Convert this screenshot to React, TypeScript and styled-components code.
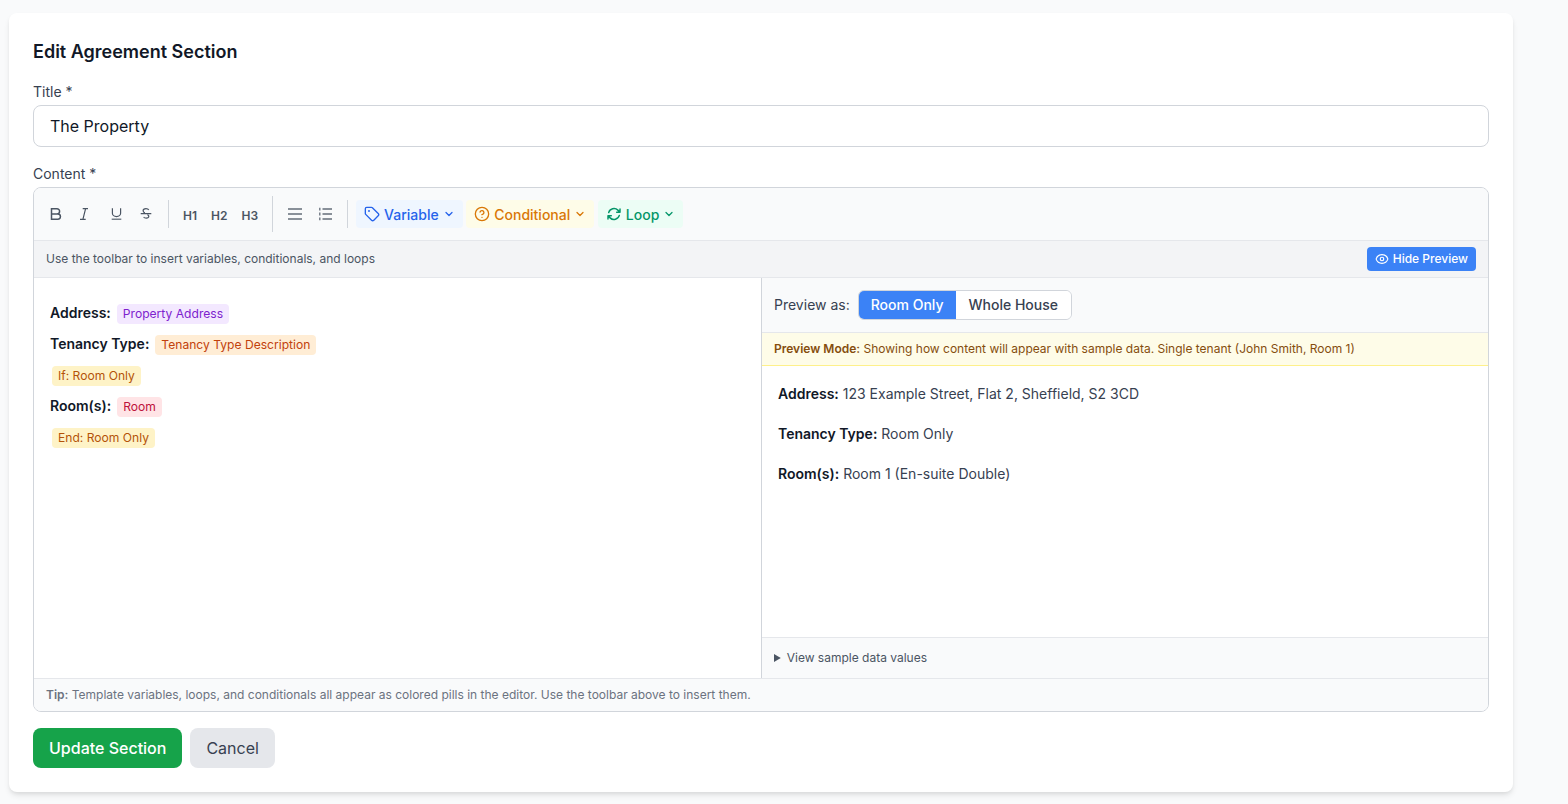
import React from "react";
import styled, { createGlobalStyle } from "styled-components";
import { ChevronDown, CircleHelp, Tag } from "lucide-react";
import { HiOutlineArrowPath, HiOutlineEye } from "react-icons/hi2";

const GlobalStyle = createGlobalStyle`
  * {
    box-sizing: border-box;
  }

  body {
    margin: 0;
    background-color: #f9fafb;
    color: #111827;
    font-family: Inter, "Liberation Sans", sans-serif;
  }
`;

const BoldIcon = () => (
  <ToolIcon viewBox="0 0 16 16" strokeWidth={1.5}>
    <path d="M3.5 2.75h5.5a2.6 2.6 0 0 1 0 5.2H3.5zM3.5 7.95h6.3a2.65 2.65 0 0 1 0 5.3H3.5z" />
  </ToolIcon>
);

const ItalicIcon = () => (
  <ToolIcon viewBox="0 0 16 16" strokeWidth={1.2}>
    <path d="M4.7 2.6H10M2 13.4h5.7M7.6 2.6 4.9 13.4" />
  </ToolIcon>
);

const UnderlineIcon = () => (
  <ToolIcon viewBox="0 0 16 16" strokeWidth={1.2}>
    <path d="M4.4 2.2v5a4.1 3.4 0 0 0 8.2 0v-5" />
    <path d="M3.7 13.3h9.6" strokeWidth={1.4} opacity={0.75} />
  </ToolIcon>
);

const StrikeIcon = () => (
  <ToolIcon viewBox="0 0 16 16" strokeWidth={1.2}>
    <path d="M10.8 3.9c-.5-.8-1.5-1.3-2.8-1.3-1.7 0-2.9.8-2.9 2.1 0 .9.5 1.6 1.8 2.2" />
    <path d="M2.7 7.7h10.6" />
    <path d="M9.4 8.6c1 .5 1.4 1.1 1.4 1.7 0 1-1 1.8-2.6 1.8-1.2 0-2.1-.4-2.6-1.1" />
  </ToolIcon>
);

const BulletIcon = () => (
  <ToolIcon viewBox="0 0 16 16" strokeWidth={1.5} opacity={0.85}>
    <path d="M1 3h14M1 8h14M1 13h14" />
  </ToolIcon>
);

const NumberedIcon = () => (
  <ToolIcon viewBox="0 0 16 16" strokeWidth={1.5} opacity={0.85}>
    <path d="M5.5 3H15M5.5 8H15M5.5 13H15" />
    <path d="M2.8 1.8v2.6M2.8 6.6v2.8M2.8 11.6v2.6" strokeWidth={1.3} />
  </ToolIcon>
);

const formatIcons = [BoldIcon, ItalicIcon, UnderlineIcon, StrikeIcon];

const App: React.FC = () => (
  <>
    <GlobalStyle />
    <Page>
      <Card>
        <Heading>Edit Agreement Section</Heading>
        <Field>
          <Label>Title *</Label>
          <TitleInput defaultValue="The Property" />
        </Field>
        <Field>
          <Label>Content *</Label>
          <Editor>
            <Toolbar>
              {formatIcons.map((Icon, i) => (
                <ToolButton key={i}>
                  <Icon />
                </ToolButton>
              ))}
              <Separator />
              <HeadingButton>H1</HeadingButton>
              <HeadingButton>H2</HeadingButton>
              <HeadingButton>H3</HeadingButton>
              <Separator $tall />
              <ToolButton>
                <BulletIcon />
              </ToolButton>
              <ToolButton>
                <NumberedIcon />
              </ToolButton>
              <Separator />
              <InsertButton $bg="#eff6ff" $fg="#2563eb">
                <Tag size={16} />
                Variable
                <ChevronDown size={12} strokeWidth={2.5} />
              </InsertButton>
              <InsertButton $bg="#fefce8" $fg="#d97706">
                <CircleHelp size={16} />
                Conditional
                <ChevronDown size={12} strokeWidth={2.5} />
              </InsertButton>
              <InsertButton $bg="#ecfdf5" $fg="#059669">
                <HiOutlineArrowPath size={16} strokeWidth={2.2} />
                Loop
                <ChevronDown size={12} strokeWidth={2.5} />
              </InsertButton>
            </Toolbar>
            <HintBar>
              <HintText>Use the toolbar to insert variables, conditionals, and loops</HintText>
              <PreviewToggle>
                <HiOutlineEye size={14} strokeWidth={2} />
                Hide Preview
              </PreviewToggle>
            </HintBar>
            <Split>
              <EditorPane>
                <EditorLine>
                  <strong>Address:</strong> <Pill $bg="#f3e8ff" $fg="#7e22ce">Property Address</Pill>
                </EditorLine>
                <EditorLine>
                  <strong>Tenancy Type:</strong>{" "}
                  <Pill $bg="#ffedd5" $fg="#c2410c">Tenancy Type Description</Pill>
                </EditorLine>
                <EditorLine>
                  <Pill $bg="#fef3c7" $fg="#b45309">If: Room Only</Pill>
                </EditorLine>
                <EditorLine>
                  <strong>Room(s):</strong> <Pill $bg="#ffe4e6" $fg="#be123c">Room</Pill>
                </EditorLine>
                <EditorLine>
                  <Pill $bg="#fef3c7" $fg="#b45309">End: Room Only</Pill>
                </EditorLine>
              </EditorPane>
              <PreviewPane>
                <PreviewBar>
                  <PreviewLabel>Preview as:</PreviewLabel>
                  <Segments>
                    <Segment $active>Room Only</Segment>
                    <Segment>Whole House</Segment>
                  </Segments>
                </PreviewBar>
                <Notice>
                  <strong>Preview Mode:</strong> Showing how content will appear with sample
                  data. Single tenant (John Smith, Room 1)
                </Notice>
                <PreviewBody>
                  <PreviewLine>
                    <strong>Address:</strong> 123 Example Street, Flat 2, Sheffield, S2 3CD
                  </PreviewLine>
                  <PreviewLine>
                    <strong>Tenancy Type:</strong> Room Only
                  </PreviewLine>
                  <PreviewLine>
                    <strong>Room(s):</strong> Room 1 (En-suite Double)
                  </PreviewLine>
                </PreviewBody>
                <SampleData>
                  <summary>View sample data values</summary>
                </SampleData>
              </PreviewPane>
            </Split>
            <TipBar>
              <strong>Tip:</strong> Template variables, loops, and conditionals all appear as
              colored pills in the editor. Use the toolbar above to insert them.
            </TipBar>
          </Editor>
        </Field>
        <Actions>
          <PrimaryButton>Update Section</PrimaryButton>
          <SecondaryButton>Cancel</SecondaryButton>
        </Actions>
      </Card>
    </Page>
  </>
);

export default App;

const Page = styled.div`
  min-height: 804px;
  padding: 13px 55px 12px 9px;
`;

const Card = styled.div`
  background-color: #fff;
  border-radius: 8px;
  box-shadow: 0 4px 6px -1px rgba(0, 0, 0, 0.1), 0 2px 4px -1px rgba(0, 0, 0, 0.06);
  padding: 24px;
`;

const Heading = styled.h2`
  font-size: 18px;
  font-weight: 600;
  height: 28px;
  line-height: 28px;
  margin: 0 0 16px;
  padding-top: 1px;
`;

const Field = styled.div`
  margin-bottom: 16px;
`;

const Label = styled.label`
  color: #374151;
  display: block;
  font-size: 14px;
  height: 20px;
  line-height: 21px;
  margin-bottom: 4px;
`;

const TitleInput = styled.input`
  border: 1px solid #d1d5db;
  border-radius: 8px;
  color: #111827;
  display: block;
  font-family: inherit;
  font-size: 16px;
  height: 42px;
  outline: none;
  padding: 0 16px;
  width: 100%;
`;

const Editor = styled.div`
  border: 1px solid #d1d5db;
  border-radius: 8px;
  overflow: hidden;
`;

const Toolbar = styled.div`
  align-items: center;
  background-color: #f9fafb;
  border-bottom: 1px solid #e5e7eb;
  display: flex;
  gap: 2px;
  height: 53px;
  padding: 0 8px;
`;

const ToolButton = styled.button`
  align-items: center;
  background: none;
  border: none;
  border-radius: 4px;
  color: #4b5563;
  display: flex;
  height: 28px;
  justify-content: center;
  padding: 0;
  width: 28px;
`;

const ToolIcon = styled.svg`
  fill: none;
  height: 16px;
  stroke: currentColor;
  width: 16px;
`;

const HeadingButton = styled.button`
  background: none;
  border: none;
  border-radius: 4px;
  color: #4b5563;
  font-family: inherit;
  font-size: 12px;
  font-weight: 600;
  height: 28px;
  padding: 3px 6px 0;
`;

const Separator = styled.div<{ $tall?: boolean }>`
  background-color: #d1d5db;
  height: ${({ $tall }) => ($tall ? "36px" : "28px")};
  margin: 0 6px;
  width: 1px;
`;

const InsertButton = styled.button<{ $bg: string; $fg: string }>`
  align-items: center;
  background-color: ${({ $bg }) => $bg};
  border: none;
  border-radius: 4px;
  color: ${({ $fg }) => $fg};
  display: flex;
  font-family: inherit;
  font-size: 14px;
  font-weight: 500;
  gap: 4px;
  height: 28px;
  margin-right: 1.6px;
  padding: 0 8px;
`;

const HintBar = styled.div`
  align-items: center;
  background-color: #f3f4f6;
  border-bottom: 1px solid #e5e7eb;
  color: #4b5563;
  display: flex;
  font-size: 12px;
  height: 37px;
  justify-content: space-between;
  padding: 0 12px;
`;

const HintText = styled.span`
  margin-bottom: 2px;
`;

const PreviewToggle = styled.button`
  align-items: center;
  background-color: #3b82f6;
  border: none;
  border-radius: 4px;
  color: #fff;
  display: flex;
  font-family: inherit;
  font-size: 12px;
  font-weight: 500;
  gap: 4px;
  height: 24px;
  padding: 0 8px 1px;
`;

const Split = styled.div`
  display: grid;
  grid-template-columns: calc(50% + 1px) 1fr;
  height: 400px;
`;

const EditorPane = styled.div`
  background-color: #fff;
  border-right: 1px solid #d1d5db;
  padding: 20px 16px;
`;

const EditorLine = styled.p`
  align-items: center;
  color: #111827;
  display: flex;
  font-size: 14px;
  gap: 4px;
  height: 31px;
  margin: 0;

  strong {
    font-weight: 600;
    margin-bottom: 2px;
  }
`;

const Pill = styled.span<{ $bg: string; $fg: string }>`
  background-color: ${({ $bg }) => $bg};
  border-radius: 4px;
  color: ${({ $fg }) => $fg};
  font-size: 12.1px;
  line-height: 20px;
  margin: 0 2px;
  padding: 0 6px;
`;

const PreviewPane = styled.div`
  display: flex;
  flex-direction: column;
  min-width: 0;
`;

const PreviewBar = styled.div`
  align-items: center;
  background-color: #f9fafb;
  border-bottom: 1px solid #e5e7eb;
  display: flex;
  gap: 8px;
  height: 55px;
  padding: 0 12px;
`;

const PreviewLabel = styled.span`
  color: #374151;
  font-size: 14px;
  margin-bottom: 2px;
`;

const Segments = styled.div`
  border: 1px solid #d1d5db;
  border-radius: 6px;
  display: flex;
  height: 30px;
  overflow: hidden;
`;

const Segment = styled.button<{ $active?: boolean }>`
  background-color: ${({ $active }) => ($active ? "#3b82f6" : "#fff")};
  border: none;
  color: ${({ $active }) => ($active ? "#fff" : "#374151")};
  font-family: inherit;
  font-size: 14px;
  font-weight: 500;
  padding: 0 12px 1px;

  & + & {
    padding-left: 13px;
    padding-right: 13px;
  }
`;

const Notice = styled.div`
  background-color: #fefce8;
  border-bottom: 1px solid #fef08a;
  color: #854d0e;
  font-size: 12px;
  height: 33px;
  line-height: 32px;
  padding: 0 12px;

  strong {
    font-weight: 600;
  }
`;

const PreviewBody = styled.div`
  background-color: #fff;
  flex: 1;
  padding: 16px;
`;

const PreviewLine = styled.p`
  color: #374151;
  font-size: 14px;
  line-height: 24px;
  margin: 0 0 16px;

  strong {
    color: #111827;
    font-weight: 600;
  }
`;

const SampleData = styled.details`
  background-color: #f9fafb;
  border-top: 1px solid #e5e7eb;
  color: #4b5563;
  font-size: 12px;
  height: 41px;
  line-height: 40px;
  padding: 0 12px;
`;

const TipBar = styled.div`
  background-color: #f9fafb;
  border-top: 1px solid #e5e7eb;
  color: #6b7280;
  font-size: 12px;
  height: 33px;
  line-height: 32px;
  padding: 0 12px;

  strong {
    font-weight: 600;
  }
`;

const Actions = styled.div`
  display: flex;
  gap: 8px;
`;

const PrimaryButton = styled.button`
  background-color: #16a34a;
  border: none;
  border-radius: 8px;
  color: #fff;
  font-family: inherit;
  font-size: 16px;
  font-weight: 500;
  height: 40px;
  padding: 0 16px;
`;

const SecondaryButton = styled(PrimaryButton)`
  background-color: #e5e7eb;
  color: #374151;
  font-weight: 400;
`;
